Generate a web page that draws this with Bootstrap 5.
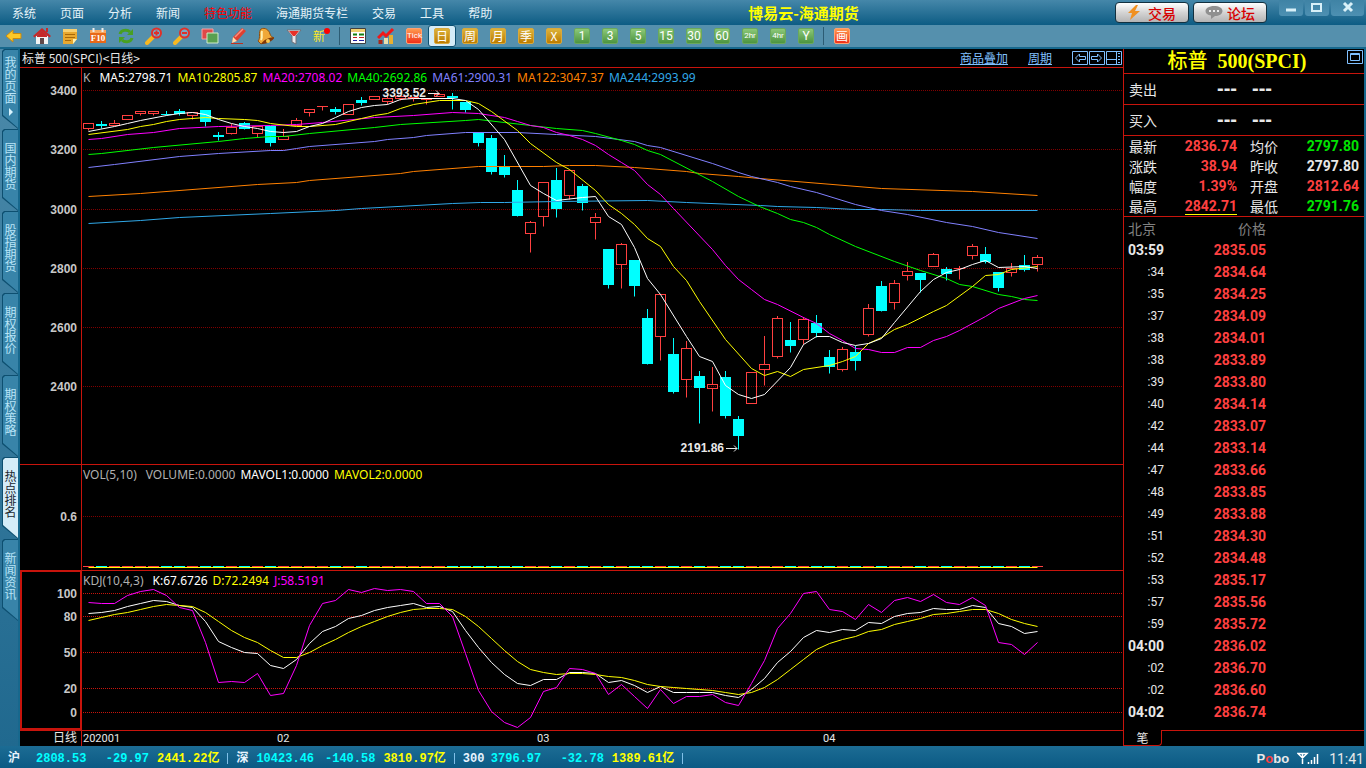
<!DOCTYPE html>
<html lang="zh-CN">
<head>
<meta charset="utf-8">
<meta name="viewport" content="width=device-width, initial-scale=1">
<title>博易云-海通期货</title>
<link href="https://cdn.jsdelivr.net/npm/bootstrap@5.3.0/dist/css/bootstrap.min.css" rel="stylesheet">
<style>
:root{--line:#c8140c;--up:#ff4040;--down:#00ffff;--teal:#17688d;--cjk:"Noto Sans CJK SC",sans-serif;--num:Roboto,"Noto Sans CJK SC",sans-serif}
body{font:12px/16px var(--cjk);background:var(--teal);color:#e8e8e8}
button{border:0;background:none;padding:0;color:inherit}
svg{display:block}
.topbar{height:25px;background:linear-gradient(#4587a9,#0d5c84)}
.topbar .menu-link{padding:0 12px;color:#e4f2f8;text-decoration:none;line-height:26px}
.topbar .menu-link.hot{color:#f00}
.apptitle{font-size:15px;font-weight:700;color:#ff0;line-height:25px;padding-right:12px}
.pill{width:74px;height:21px;margin-top:2px;border:1px solid #12303f;border-radius:4px;background:linear-gradient(#fff,#d4d4d4 50%,#b4b4b4);color:#d80000;font-size:14px;font-weight:500;line-height:18px}
.winbtns{padding-left:12px;padding-right:2px;gap:2px}
.winbtn{height:16px;width:24px;background:linear-gradient(#3f83a5,#4d90b2);border-radius:0 0 3px 3px;display:flex;justify-content:center}
.winbtn.wide{width:33px}
.toolbar{height:24px;background:#5590ad;border-bottom:2px solid var(--teal)}
.tool{width:28px;height:22px}
.tool.on{background:#d4ecf8;border:1px solid #0d4f70;border-radius:3px}
.chip{width:16px;height:16px;border-radius:2px;color:#fff;font:12px/14px var(--num);text-align:center;border:1px solid #6aa85c;background:linear-gradient(#8cc878,#4c9440)}
.chip.gold{background:linear-gradient(#dcb23a,#bc7c00);border-color:#d8a83c;font-family:var(--cjk)}
.chip.tiny{font-size:8px}
.chip.red{background:linear-gradient(#ff9a50,#f03018);border-color:#ffa070;font-family:var(--cjk)}
.chip.tiny.red{font-family:var(--num)}
.sep{width:8px;height:18px;background:linear-gradient(#2c5c74,#2c5c74) 3px 0/1px 100% no-repeat}
.sidenav{width:20px;padding:0 2px;background:linear-gradient(90deg,transparent 18px,var(--teal) 18px),linear-gradient(#4c8aaa,#20698f)}
.sidetab{position:relative;display:flex;flex-direction:column;width:16px;height:82px;padding-top:13px;background:#0d4f70;color:#b8e4f8;clip-path:polygon(0 2px,2px 0,100% 0,100% 100%,0 calc(100% - 13px))}
.sidetab::before{content:"";position:absolute;inset:1px 0 1px 1px;background:#3884a9;clip-path:polygon(0 2px,2px 0,100% 0,100% 100%,0 calc(100% - 13px))}
.sidetab span{position:relative;writing-mode:vertical-rl;text-orientation:upright;line-height:16px;width:16px}
.sidetab.active{color:#202830}
.sidetab.active::before{background:#d4ecf8}
.sidetab.first{padding-top:7px;height:80px}
.screen{background:#000}
.charthead{height:19px;border-bottom:1px solid var(--line);line-height:18px;padding-left:2px}
.charthead a{color:#80c0ff}
.panes{display:grid;grid-template-rows:minmax(0,397fr) minmax(0,106fr) minmax(0,160fr)}
.pane{position:relative;border-bottom:1px solid var(--line)}
.pane svg,.xaxis svg{width:100%;height:0;flex:1 1 0;min-height:0}
.legend{position:absolute;left:63px;top:0;gap:5px;font:12px/20px "Noto Sans",sans-serif;white-space:nowrap}
.xaxis{height:15px}
.xaxis svg{overflow:visible}
.c-k{color:#b0b0b0}.c-w{color:#fff}.c-y{color:#ff0}.c-m{color:#f0f}.c-g{color:#0f0}.c-v{color:#8080ff}.c-o{color:#ff8000}.c-b{color:#30a8e8}
.quote{width:241px;border-left:1px solid var(--line);margin-right:2px}
.qtitle{height:25px;border-bottom:1px solid var(--line);padding-right:14px;font:700 20px/24px "Liberation Serif","Noto Sans CJK SC",serif;color:#ff0;position:relative}
.qtitle b{font-weight:500;padding-right:10px}
.qtitle button{position:absolute;right:1px;top:1px}
.bidrow{height:31px;border-bottom:1px solid var(--line);font-size:14px;line-height:30px;padding-left:5px}
.bidrow b{font:700 20px/28px "Liberation Sans",sans-serif;width:35px;text-align:right}
.bidrow span+b{width:80px}
.qgrid,.ticks{width:100%;table-layout:fixed;border-collapse:collapse;font-size:14px}
.qgrid td,.qgrid th,.ticks td,.ticks th{padding:0;font-weight:400;white-space:nowrap}
.qgrid tr{height:20px;line-height:20px}
.qgrid th{padding-left:5px}
.qgrid th+td+th{padding-left:13px}
.qgrid td,.ticks td{font:700 14px/20px var(--num);text-align:right}
.qgrid td:last-child{padding-right:5px}
.qgrid span{border-bottom:1px solid #ff0}
.qbox{border-bottom:1px solid var(--line)}
.ticks tr{height:22px;line-height:22px}
.ticks thead{color:#808080}
.ticks td{line-height:22px}
.ticks td:first-child{font-weight:400;font-size:12px}
.ticks td.mark-hour:first-child{font-weight:700;font-size:14px}
.up{color:var(--up)}.dn{color:#00e400}
.qfoot{height:16px}
.qfoot button{width:38px;border:1px solid var(--line);border-width:0 1px 1px 0;border-radius:0 0 4px 0;line-height:14px}
.qfoot i{border-top:1px solid var(--line)}
.status{height:22px;padding:3px 2px 0 8px;background:linear-gradient(#1c6c94,#0b5a84);font:700 12px/18px "Liberation Mono","Noto Sans CJK SC",monospace}
.idx{color:#0ff}
.idx em{font-style:normal;color:#e8f4ff}
.idx u{text-decoration:none;color:#ff0}
.status hr{width:1px;height:11px;margin:0;background:#80c0e8;border:0;opacity:1}
.idx .nm{width:28px}.idx .nm.short{width:20px}.idx .vl{width:57px}.idx .ch{width:56px;text-align:right}.idx .ch.long{width:62px}
.brand{font:700 13px/18px "Liberation Sans",sans-serif}
.clock{font:14px/18px Roboto,sans-serif}
</style>
</head>
<body>
<div class="d-flex flex-column min-vh-100">
<header class="topbar d-flex">
  <nav class="d-flex">
    <a class="menu-link" href="#">系统</a><a class="menu-link" href="#">页面</a><a class="menu-link" href="#">分析</a><a class="menu-link" href="#">新闻</a><a class="menu-link hot" href="#">特色功能</a><a class="menu-link" href="#">海通期货专栏</a><a class="menu-link" href="#">交易</a><a class="menu-link" href="#">工具</a><a class="menu-link" href="#">帮助</a>
  </nav>
  <div class="apptitle flex-grow-1 text-center">博易云-海通期货</div>
  <div class="d-flex">
    <button class="pill d-flex align-items-center justify-content-center gap-2 me-1"><svg width="12" height="15"><path d="M8 0 0 8h4L2 15 12 6H7L10 0z" fill="#f09020"/></svg>交易</button>
    <button class="pill d-flex align-items-center justify-content-center gap-1"><svg width="18" height="15"><path d="M9 1c5 0 8.500 2 8.500 5S14 11 10 11l-4 3v-3.500C2.500 10 .5 8.500.5 6S4 1 9 1z" fill="#909090"/><path d="M4 5h2v2H4zM8 5h2v2H8zM12 5h2v2h-2z" fill="#eee"/></svg>论坛</button>
  </div>
  <div class="winbtns d-flex">
    <button class="winbtn" aria-label="最小化"><svg width="24" height="16"><path d="M7 10h10" stroke="#d8f0f8" stroke-width="3"/></svg></button>
    <button class="winbtn" aria-label="最大化"><svg width="24" height="16"><path d="M7 4h9v7H7z" stroke="#d8f0f8" stroke-width="2" fill="none"/></svg></button>
    <button class="winbtn wide" aria-label="关闭"><svg width="24" height="16"><path d="M8 3l8 8M16 3l-8 8" stroke="#d8f0f8" stroke-width="3"/></svg></button>
  </div>
</header>
<div class="toolbar d-flex align-items-center" id="tools"></div>
<main class="d-flex flex-grow-1">
  <nav class="sidenav d-flex flex-column flex-shrink-0">
    <button class="sidetab first"><span>我的页面</span><svg class="position-relative" width="16" height="16"><path d="M7 4l4 4-4 4z" fill="#d8f4ff"/></svg></button>
    <button class="sidetab"><span>国内期货</span></button>
    <button class="sidetab"><span>股指期货</span></button>
    <button class="sidetab"><span>期权报价</span></button>
    <button class="sidetab"><span>期权策略</span></button>
    <button class="sidetab active"><span>热点排名</span></button>
    <button class="sidetab"><span>新闻资讯</span></button>
  </nav>
  <section class="screen d-flex flex-column flex-grow-1">
    <div class="charthead d-flex">
      <span class="me-auto">标普 500(SPCI)&lt;日线&gt;</span>
      <a href="#" class="me-1 pe-3">商品叠加</a><a href="#" class="me-1 pe-3">周期</a>
      <button aria-label="向左"><svg width="17" height="16" fill="none" stroke="#80c0ff"><path d="M.5 1.500h15v13H.5zM3.500 8l4-4v2.500h6v3h-6V12z"/></svg></button>
      <button aria-label="向右"><svg width="17" height="16" fill="none" stroke="#80c0ff"><path d="M.5 1.500h15v13H.5zM12.500 8l-4-4v2.500h-6v3h6V12z"/></svg></button>
      <button aria-label="布局"><svg width="17" height="16" fill="none" stroke="#80c0ff"><path d="M.5 1.500h15v13H.5zM10.500 1v14M.5 9.500h10"/><path d="M13 3v10" stroke-width="2" stroke-dasharray="1 2"/></svg></button>
    </div>
    <div class="panes flex-grow-1">
      <div class="pane d-flex flex-column"><svg id="price"></svg>
        <div class="legend d-flex"><span class="c-k pe-1">K</span><span class="c-w">MA5:2798.71</span><span class="c-y">MA10:2805.87</span><span class="c-m">MA20:2708.02</span><span class="c-g">MA40:2692.86</span><span class="c-v">MA61:2900.31</span><span class="c-o">MA122:3047.37</span><span class="c-b">MA244:2993.99</span></div>
      </div>
      <div class="pane d-flex flex-column"><svg id="vol"></svg>
        <div class="legend d-flex"><span class="c-k pe-1">VOL(5,10)</span><span class="c-k">VOLUME:0.0000</span><span class="c-w">MAVOL1:0.0000</span><span class="c-y">MAVOL2:0.0000</span></div>
      </div>
      <div class="pane d-flex flex-column"><svg id="kdj"></svg>
        <div class="legend d-flex"><span class="c-k pe-1">KDJ(10,4,3)</span><span class="c-w">K:67.6726</span><span class="c-y">D:72.2494</span><span class="c-m">J:58.5191</span></div>
      </div>
    </div>
    <div class="xaxis d-flex flex-column"><svg id="dates"></svg></div>
  </section>
  <aside class="quote screen d-flex flex-column flex-shrink-0">
    <div class="qtitle d-flex justify-content-center"><b>标普</b><span>500(SPCI)</span><button aria-label="还原"><svg width="16" height="14" fill="none" stroke="#80c0ff"><path d="M.5.5h15v13H.5zM3.500 3.500h9v7h-9zM3.500 4.500h9"/></svg></button></div>
    <div class="bidrow d-flex"><span>卖出</span><b>---</b><b>---</b></div>
    <div class="bidrow d-flex"><span>买入</span><b>---</b><b>---</b></div>
    <div class="qbox">
    <table class="qgrid">
      <colgroup><col style="width:36px"><col style="width:77px"><col style="width:46px"><col></colgroup>
      <tr><th>最新</th><td class="up">2836.74</td><th>均价</th><td class="dn">2797.80</td></tr>
      <tr><th>涨跌</th><td class="up">38.94</td><th>昨收</th><td>2797.80</td></tr>
      <tr><th>幅度</th><td class="up">1.39%</td><th>开盘</th><td class="up">2812.64</td></tr>
      <tr><th>最高</th><td class="up"><span>2842.71</span></td><th>最低</th><td class="dn">2791.76</td></tr>
    </table>
    </div>
    <table class="ticks">
      <colgroup><col style="width:40px"><col style="width:102px"><col></colgroup>
      <thead><tr><th class="ps-1">北京</th><th class="text-end">价格</th><th></th></tr></thead>
      <tbody id="ticks"></tbody>
    </table>
    <div class="qfoot d-flex mt-auto"><button>笔</button><i class="flex-grow-1"></i></div>
  </aside>
</main>
<footer class="status d-flex align-items-center">
  <div class="idx d-flex"><em class="nm">沪</em><span class="vl">2808.53</span><span class="ch">-29.97</span><u class="ms-2">2441.22亿</u></div><hr class="mx-2">
  <div class="idx d-flex"><em class="nm short">深</em><span class="vl">10423.46</span><span class="ch long">-140.58</span><u class="ms-2">3810.97亿</u></div><hr class="mx-2">
  <div class="idx d-flex"><em class="nm">300</em><span class="vl">3796.97</span><span class="ch">-32.78</span><u class="ms-2">1389.61亿</u></div><hr class="mx-2">
  <div class="ms-auto d-flex align-items-center gap-2">
    <span class="brand">P<span class="up">o</span>bo</span>
    <svg width="24" height="13" stroke="#fff" fill="none"><path d="M1 1.500h9L5.500 6zM5.500 1v11M11.500 12v-2M14.500 12V8M17.500 12V5M20.500 12V2" stroke-width="1.500"/></svg>
    <span class="clock">11:41</span>
  </div>
</footer>
</div>
<script src="https://cdn.jsdelivr.net/npm/bootstrap@5.3.0/dist/js/bootstrap.bundle.min.js"></script>
<script>
/* toolbar */
const ic = s => `<svg width="18" height="18">${s}</svg>`;
const chip = (t, c) => `<span class="chip ${c || ''}">${t}</span>`;
const mag = s => ic(`<path d="M2 16l6-6" stroke="#f8b820" stroke-width="4" stroke-linecap="round"/><circle cx="11.500" cy="6" r="4.500" fill="#78a8c4" stroke="#e03028" stroke-width="2"/><path d="${s}" stroke="#e03028" stroke-width="2"/>`);
const tools = [
 ic('<path d="M1 9l7-6v3.500h8v5H8V15z" fill="#fcc828" stroke="#c88a10"/>'),
 ic('<path d="M3 9h12v8H3z" fill="#f4f4f4"/><path d="M0 9l9-8 9 8-1.500 1.500L9 4 1.500 10.500z" fill="#c82828"/><path d="M13 1h2v4h-2z" fill="#c82828"/><path d="M9 3.500l5 5V10H4V8.500z" fill="#c82828"/><path d="M7 11h4v6H7z" fill="#604848"/>'),
 ic('<path d="M2 2h14v10l-4 5H2z" fill="#e8a830"/><path d="M2 2h14v3H2z" fill="#f8d070"/><path d="M4 7.500h10M4 10.500h10M4 13.500h6" stroke="#a86808"/><path d="M16 12h-4v5z" fill="#fff0b0"/>'),
 '<svg width="18" height="18"><path d="M1 3h16v13H1z" fill="#e86818"/><path d="M1 3h16v3H1z" fill="#f8a860"/><path d="M4.500 1v4M13.500 1v4" stroke="#eee" stroke-width="2"/><text x="9" y="14" text-anchor="middle" font-family="Liberation Serif" font-weight="700" font-size="9" fill="#fff">F10</text></svg>',
 ic('<path d="M3 7c1-4 7-5 10-2" stroke="#48a020" stroke-width="3" fill="none"/><path d="M16 2v6h-6z" fill="#48a020"/><path d="M15 11c-1 4-7 5-10 2" stroke="#48a020" stroke-width="3" fill="none"/><path d="M2 16v-6h6z" fill="#48a020"/>'),
 mag('M9 6h5M11.500 3.500v5'), mag('M9 6h5'),
 ic('<path d="M1 2h11v10H1z" fill="#e04848" stroke="#f8a0a0"/><path d="M6 6h11v10H6z" fill="#58a050" stroke="#d0ecc8"/>'),
 ic('<path d="M4 10L13 1l4 3-9 10-5 2z" fill="#e04030"/><path d="M6 10l8-8" stroke="#f89080" stroke-width="1.500"/><path d="M4 10l4 4-5 2z" fill="#fce0b0"/><path d="M2 16.500h12" stroke="#c03020"/>'),
 ic('<path d="M4 2c4-2 8 1 9 5 .5 2 2 3 4 4L4 17 1 14c3-3 0-9 3-12z" fill="#f0a838" stroke="#905010"/><path d="M17 10.500c0 3-8 7-12.500 6.500C5 14 13 9.500 17 10.500z" fill="#803808"/><path d="M5 4c-1 3 1 6-1 9" stroke="#fff0b0" stroke-width="2" fill="none"/><circle cx="11" cy="14" r="2" fill="#f8c850"/>'),
 ic('<path d="M2 3h14l-5 6v8l-4-2V9z" fill="#e8e8ec" stroke="#707078"/><path d="M4 4h10l-4 5H8z" fill="#e83028"/>'),
 '<svg width="20" height="20"><text x="1" y="15" font-size="12" font-family="Noto Sans CJK SC" fill="#ffe828">新</text><circle cx="15" cy="5" r="3" fill="#f00"/></svg>',
 '|',
 ic('<path d="M1.500 1.500h15v15h-15z" fill="#fff" stroke="#404040"/><path d="M2 2h14v3H2z" fill="#f0d070"/><path d="M4 7.500h4M10 7.500h5" stroke="#108010" stroke-width="2"/><path d="M4 10.500h4M10 10.500h5" stroke="#c02020"/><path d="M4 13.500h4M10 13.500h5" stroke="#2020a0"/>'),
 ic('<path d="M3.500 13v4" stroke-width="4" stroke="#a82818"/><path d="M9 11v6" stroke-width="4" stroke="#e8e0b0"/><path d="M14 8v9" stroke-width="4" stroke="#e8b030"/><path d="M1 11l5-5 3 3 7-7" stroke="#f01818" stroke-width="3" fill="none"/>'),
 chip('Tick', 'red tiny'), '!' + chip('日', 'gold'), chip('周', 'gold'), chip('月', 'gold'), chip('季', 'gold'), chip('X', 'gold'),
 chip('1'), chip('3'), chip('5'), chip('15'), chip('30'), chip('60'), chip('2hr', 'tiny'), chip('4hr', 'tiny'), chip('Y'), '|', chip('画', 'red')];
document.getElementById('tools').innerHTML = tools.map(t => t === '|' ? '<span class="sep"></span>' :
  `<button class="tool d-flex align-items-center justify-content-center${t[0] === '!' ? ' on' : ''}">${t.replace(/^!/, '')}</button>`).join('');

/* tick list */
const ticks = '03:59 2835.05,:34 2834.64,:35 2834.25,:37 2834.09,:38 2834.01,:38 2833.89,:39 2833.80,:40 2834.14,:42 2833.07,:44 2833.14,:47 2833.66,:48 2833.85,:49 2833.88,:51 2834.30,:52 2834.48,:53 2835.17,:57 2835.56,:59 2835.72,04:00 2836.02,:02 2836.70,:02 2836.60,04:02 2836.74';
document.getElementById('ticks').innerHTML = ticks.split(',').map(r => { const [t, p] = r.split(' ');
  return `<tr><td class="${t.length > 3 ? 'mark-hour' : ''}">${t}</td><td class="up">${p}</td><td></td></tr>`; }).join('');

/* candles: direction, high, body top, body bottom, low */
const bars = `r 123 123 128 130,c 121 124 126 128,r 120 123 125 125,r 115 115 119 119,r 111 111 113 115,r 111 111 113 115,c 111 114 115 115,c 109 111 114 115,r 112 112 115 119,c 110 110 122 126,c 132 135 137 140,r 124 127 133 134,c 122 123 129 129,r 126 126 133 137,c 126 126 143 146,r 129 136 139 139,r 118 120 125 125,r 109 109 112 116,r 106 106 106 110,c 107 109 112 114,r 104 104 114 114,c 97 100 103 105,r 96 96 99 99,r 95 98 101 104,r 96 96 98 100,r 97 97 98 101,r 98 99 99 104,r 93 94 96 96,c 93 96 98 109,c 102 102 110 112,c 132 132 143 146,c 135 138 172 174,c 155 167 175 177,c 180 190 216 216,r 221 222 233 252,r 182 182 216 226,c 168 180 209 217,r 170 170 195 199,c 184 186 203 210,r 213 217 222 239,c 249 249 285 288,r 243 244 264 288,c 260 260 286 296,c 309 318 364 364,r 294 294 336 360,c 338 354 392 393,r 341 348 379 397,c 371 376 388 423,r 367 384 388 411,c 371 377 416 418,c 416 419 436 449,r 372 372 403 403,r 336 364 369 385,r 316 318 356 358,c 322 340 346 352,r 317 319 339 344,c 315 323 333 337,c 350 357 367 373,r 347 349 369 371,c 346 352 361 370,r 304 308 334 336,c 281 286 311 311,r 280 283 302 309,r 262 271 275 280,c 273 273 280 292,r 253 254 266 266,c 267 269 274 280,r 266 268 268 279,r 244 246 255 259,c 247 254 262 263,c 272 272 288 291,r 263 268 272 276,c 255 265 270 271,r 255 257 264 271`
  .split(',').map(s => { const a = s.split(' '); return [a[0], ...a.slice(1).map(Number)]; });
const averages = {
 '#30a8e8': '88,223 140,220 179,217 270,213 335,210 361,208 452,203 480,202 504,202 556,201 647,200 686,202 760,205 777,206 816,207 855,209 881,209 920,210 1037,210',
 '#ff8000': '88,196 140,193 257,184 296,182 309,180 400,173 413,171 478,166 543,166 569,165 595,165 634,167 686,171 699,173 738,176 759,178 881,188 972,191 1037,195',
 '#8080ff': '88,167 114,164 179,156 218,153 270,150 283,150 296,148 309,146 374,141 387,139 413,137 426,135 465,132 517,132 556,134 595,136 634,141 647,145 660,147 712,163 738,172 751,176 777,182 790,186 816,192 855,204 881,210 907,214 946,222 972,226 998,232 1037,238',
 '#00ff00': '88,154 101,153 153,147 218,141 244,138 270,136 283,136 309,133 374,127 400,124 465,120 478,119 504,122 530,125 556,128 582,130 595,133 621,140 634,144 647,150 660,154 712,181 738,196 759,206 777,213 790,219 803,222 816,227 829,234 855,246 894,261 920,270 946,278 959,284 972,286 998,294 1011,296 1024,299 1037,300',
 '#ff00ff': '88,139 101,138 127,134 153,132 179,128 218,126 270,125 296,124 322,122 374,117 413,115 452,112 478,113 504,117 517,121 530,125 543,127 556,132 569,135 582,139 595,145 608,154 621,162 634,170 647,184 660,194 673,208 712,249 725,265 738,279 751,289 764,299 777,304 803,317 816,323 829,333 842,340 855,348 868,349 881,352 894,352 907,347 920,347 933,340 946,336 959,330 985,316 998,308 1024,298 1037,295',
 '#ffff00': '88,134 127,129 140,126 153,124 166,121 179,119 205,117 218,118 244,119 257,120 270,123 296,126 309,126 335,124 361,118 374,115 387,113 400,108 413,104 439,100 465,100 478,103 491,111 517,130 530,143 556,162 569,169 595,190 608,204 621,213 634,224 647,238 660,246 673,266 686,280 699,301 725,339 751,368 764,375 777,371 790,376 803,369 829,365 842,361 855,356 868,343 881,337 894,329 907,324 933,311 946,305 972,286 985,275 998,274 1011,269 1037,266',
 '#ffffff': '88,131 114,126 127,123 140,120 166,115 179,113 192,112 205,114 218,119 231,123 244,126 257,128 270,131 283,132 296,131 309,126 322,123 335,117 348,111 361,107 374,105 387,104 400,99 413,98 452,98 465,100 478,109 504,139 530,185 543,193 556,200 582,197 595,196 608,216 621,224 634,247 647,278 660,294 686,336 699,356 712,361 725,385 738,394 751,398 764,394 790,367 803,344 816,336 829,336 842,342 855,345 868,343 881,338 894,322 920,291 933,279 946,272 959,269 972,264 985,260 998,267 1024,266 1037,268'};
const kdj = {
 '#ffffff': [613,612,610,606,603,600,601,605,607,621,641,647,652,653,665,668,659,643,631,626,618,615,610,607,605,603,607,606,611,630,647,662,674,683,685,679,679,672,672,673,682,680,685,692,686,692,692,692,692,695,697,689,678,662,651,637,630,632,629,630,622,623,616,613,612,608,609,609,605,607,623,626,633,631],
 '#ffff00': [620,617,614,612,609,606,604,605,606,612,621,630,637,642,650,657,657,652,645,639,632,626,621,616,612,609,608,608,609,616,626,638,650,661,669,672,674,673,673,674,676,677,680,684,686,687,688,689,690,692,694,692,687,679,669,659,649,643,639,636,631,629,624,621,618,614,613,611,609,609,613,619,623,626],
 '#ff00ff': [602,603,603,595,591,589,595,607,610,642,682,681,682,673,695,693,665,625,603,600,589,592,588,590,589,591,603,603,616,653,690,711,722,727,717,691,687,668,669,673,694,684,696,708,689,703,696,696,694,702,705,683,660,628,613,593,591,609,611,619,604,612,600,597,601,594,602,604,597,605,642,644,654,642]};

const $ = id => document.getElementById(id);
/* x spans 20..1123 and y spans y0..y1 in data units, fitted to the pane */
function pane(id, y0, y1, rows, gridColor, body) {
  const el = $(id), w = el.clientWidth, h = el.clientHeight;
  const X = v => Math.round((v - 20) * w / 1103), Y = v => Math.round((v - y0) * h / (y1 - y0));
  let s = '';
  for (const [t, y] of rows) s += `<path d="M63 ${Y(y) + .5}H${w}" stroke="${gridColor}" stroke-dasharray="1 1"/>` +
    `<text x="57" y="${Y(y) + 5}" text-anchor="end" font-family="Liberation Sans" font-weight="700" font-size="12" fill="#c8c8c8">${t}</text>`;
  s += `<path d="M61.5 0V${h}" stroke="#c8140c"/>`;
  el.innerHTML = s + body(X, Y, w, h);
}
const poly = (pts, c, X, Y) => `<polyline fill="none" stroke="${c}" points="${pts.map(p => (X(p[0]) + .5) + ',' + (Y(p[1]) + .5)).join(' ')}"/>`;
function draw() {
  pane('price', 68, 464, [[3400,90],[3200,149],[3000,209],[2800,268],[2600,327],[2400,386]], '#800000', (X, Y) => {
    let s = '';
    bars.forEach(([d, hi, t, b, lo], i) => {
      const x = X(88 + 13 * i), c = d === 'r' ? '#ff4040' : '#00ffff', top = Y(t), bot = Y(b);
      s += `<path d="M${x + .5} ${Y(hi)}V${top}M${x + .5} ${bot}V${Y(lo) + .5}" stroke="${c}"/>`;
      s += d === 'c' ? `<rect x="${x - 5}" y="${top}" width="11" height="${Math.max(1, bot - top)}" fill="${c}"/>`
         : top === bot ? `<path d="M${x - 5} ${top + .5}h11" stroke="${c}"/>`
         : `<rect x="${x - 4.5}" y="${top + .5}" width="10" height="${bot - top}" fill="none" stroke="${c}"/>`;
    });
    for (const c in averages) s += poly(averages[c].split(' ').map(p => p.split(',').map(Number)), c, X, Y);
    for (const [t, x, y] of [['3393.52', 440, 93], ['2191.86', 738, 448]])
      s += `<text x="${X(x) - 14}" y="${Y(y) + 4}" text-anchor="end" font-family="Liberation Sans" font-weight="700" font-size="12" fill="#e8e8e8">${t}</text><path d="M${X(x) - 12} ${Y(y) + .5}h11m-3 -3l3 3-3 3" fill="none" stroke="#e8e8e8"/>`;
    return s;
  });
  pane('vol', 465, 570, [['0.6', 516]], '#800000', (X, Y) =>
    poly([[88, 567], [1037, 567]], '#ffff00', X, Y) +
    bars.map((b, i) => `<path d="M${X(88 + 13 * i) - 5} ${Y(566) + .5}h11" stroke="${b[0] === 'r' ? '#ff4040' : '#00ffff'}"/>`).join(''));
  pane('kdj', 571, 730, [[100,593],[80,616],[50,652],[20,688],[0,712]], '#c8140c', (X, Y, w, h) =>
    Object.keys(kdj).map(c => poly(kdj[c].map((y, i) => [88 + 13 * i, y]), c, X, Y)).join('') +
    `<rect x="1" y="0" width="60" height="${h - 1}" fill="none" stroke="#c8140c" stroke-width="2"/>`);
  pane('dates', 0, 15, [], '', X => [['202001', 83], ['02', 277], ['03', 537], ['04', 823]].map(([t, x]) =>
    `<text x="${X(x)}" y="11" font-family="Roboto" font-size="11" fill="#e8e8e8">${t}</text>`).join('') +
    '<text x="57" y="11" text-anchor="end" font-family="Noto Sans CJK SC" font-size="12" fill="#e8e8e8">日线</text>');
}
draw();
addEventListener('resize', draw);
</script>
</body>
</html>
